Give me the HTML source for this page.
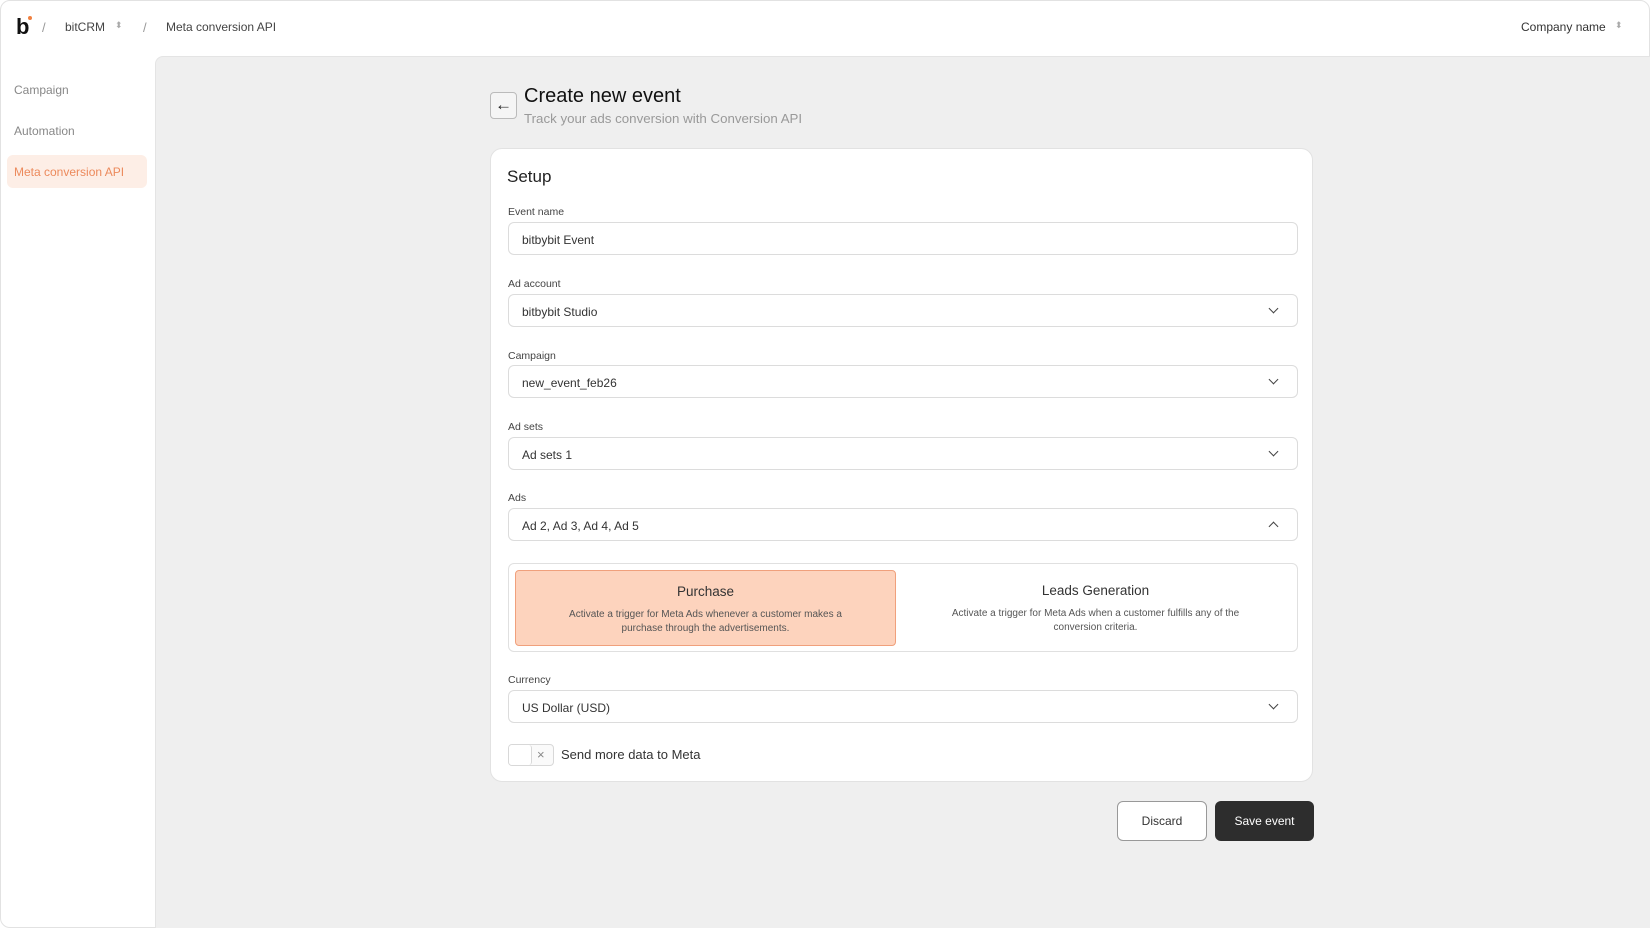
<!DOCTYPE html>
<html><head><meta charset="utf-8"><style>
*{box-sizing:border-box;margin:0;padding:0}
body{width:1650px;height:928px;background:#fff;font-family:"Liberation Sans",sans-serif;position:relative;overflow:hidden;color:#222}
.frame{position:absolute;left:0;top:0;width:1650px;height:928px;border:1px solid #e2e2e2;border-radius:10px}
.a{position:absolute;white-space:nowrap}
.main{position:absolute;left:155px;top:56px;width:1495px;height:872px;background:#efefef;border-top:1px solid #e4e4e4;border-left:1px solid #e4e4e4;border-top-left-radius:8px}
.card{position:absolute;left:490px;top:148px;width:823px;height:634px;background:#fff;border:1px solid #e2e2e2;border-radius:12px}
.lbl{position:absolute;left:17px;font-size:10.5px;color:#444}
.inp{position:absolute;left:17px;width:790px;height:33px;border:1px solid #dcdcdc;border-radius:6px;font-size:12px;color:#333;padding:10px 13px}
.chev{position:absolute;right:20px;top:10px;width:7px;height:7px;border-right:1.3px solid #444;border-bottom:1.3px solid #444;transform:rotate(45deg)}
.chev.up{transform:rotate(-135deg);top:14px}
</style></head><body>
<div class="frame"></div>
<div class="a" style="left:16px;top:14px;font-size:22px;font-weight:bold;color:#111">b</div>
<div class="a" style="left:28px;top:16px;width:4px;height:4px;border-radius:50%;background:#f08040"></div>
<div class="a" style="left:42px;top:20px;font-size:13px;color:#999">/</div>
<div class="a" style="left:65px;top:20px;font-size:12px;color:#444">bitCRM</div>
<div class="a" style="left:115px;top:20px;font-size:9px;color:#aaa">⬍</div>
<div class="a" style="left:143px;top:20px;font-size:13px;color:#999">/</div>
<div class="a" style="left:166px;top:20px;font-size:12px;color:#444">Meta conversion API</div>
<div class="a" style="left:1521px;top:20px;font-size:12px;color:#333">Company name</div>
<div class="a" style="left:1615px;top:20px;font-size:9px;color:#aaa">⬍</div>
<div class="a" style="left:14px;top:83px;font-size:12px;color:#888">Campaign</div>
<div class="a" style="left:14px;top:124px;font-size:12px;color:#888">Automation</div>
<div class="a" style="left:7px;top:155px;width:140px;height:33px;background:#fdeee6;border-radius:6px"></div>
<div class="a" style="left:14px;top:165px;font-size:12px;color:#ec8a5c">Meta conversion API</div>
<div class="main"></div>
<div class="a" style="left:490px;top:92px;width:27px;height:27px;border:1px solid #bbb;border-radius:4px;background:#f5f5f5;text-align:center;line-height:24px;font-size:17px;color:#222">←</div>
<div class="a" style="left:524px;top:85px;font-size:20px;color:#111">Create new event</div>
<div class="a" style="left:524px;top:111px;font-size:13.3px;color:#999">Track your ads conversion with Conversion API</div>
<div class="card">
<div class="a" style="left:16px;top:18px;font-size:17px;color:#222">Setup</div>
<div class="lbl" style="top:57px">Event name</div>
<div class="inp" style="top:73px">bitbybit Event</div>
<div class="lbl" style="top:129px">Ad account</div>
<div class="inp" style="top:145px">bitbybit Studio<div class="chev"></div></div>
<div class="lbl" style="top:201px">Campaign</div>
<div class="inp" style="top:216px">new_event_feb26<div class="chev"></div></div>
<div class="lbl" style="top:272px">Ad sets</div>
<div class="inp" style="top:288px">Ad sets 1<div class="chev"></div></div>
<div class="lbl" style="top:343px">Ads</div>
<div class="inp" style="top:359px">Ad 2, Ad 3, Ad 4, Ad 5<div class="chev up"></div></div>
<div class="a" style="left:17px;top:414px;width:790px;height:89px;border:1px solid #e0e0e0;border-radius:6px">
 <div class="a" style="left:6px;top:6px;width:381px;height:76px;background:#fdd3bd;border:1px solid #f0a07c;border-radius:4px;text-align:center">
  <div style="margin-top:13px;font-size:13.5px;color:#333">Purchase</div>
  <div style="margin-top:9px;font-size:10px;color:#555;line-height:14px">Activate a trigger for Meta Ads whenever a customer makes a<br>purchase through the advertisements.</div>
 </div>
 <div class="a" style="left:390px;top:6px;width:393px;height:76px;text-align:center">
  <div style="margin-top:13px;font-size:13.5px;color:#333">Leads Generation</div>
  <div style="margin-top:9px;font-size:10px;color:#555;line-height:14px">Activate a trigger for Meta Ads when a customer fulfills any of the<br>conversion criteria.</div>
 </div>
</div>
<div class="lbl" style="top:525px">Currency</div>
<div class="inp" style="top:541px">US Dollar (USD)<div class="chev"></div></div>
<div class="a" style="left:17px;top:595px;width:46px;height:22px;border:1px solid #d8d8d8;border-radius:4px;background:#fafafa">
 <div class="a" style="left:0;top:0;width:23px;height:20px;background:#fff;border-right:1px solid #d8d8d8;border-radius:3px"></div>
 <div class="a" style="left:28px;top:2px;font-size:13px;color:#888">×</div>
</div>
<div class="a" style="left:70px;top:598px;font-size:13px;color:#333">Send more data to Meta</div>
</div>
<div class="a" style="left:1117px;top:801px;width:90px;height:40px;border:1px solid #999;border-radius:6px;background:#fff;text-align:center;line-height:38px;font-size:12px;color:#333">Discard</div>
<div class="a" style="left:1215px;top:801px;width:99px;height:40px;border-radius:6px;background:#2d2d2d;text-align:center;line-height:40px;font-size:12px;color:#fff">Save event</div>
</body></html>
